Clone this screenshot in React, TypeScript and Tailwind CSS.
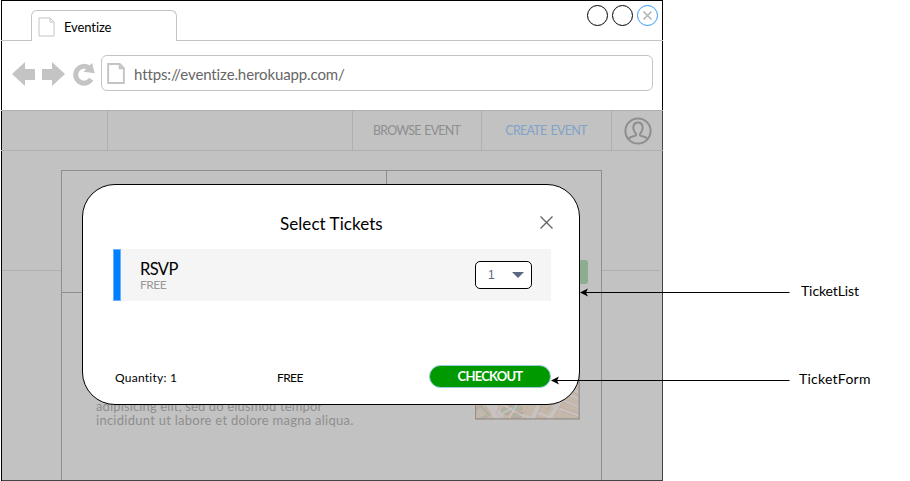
import type { ReactNode } from "react";

function PageIcon({ className, stroke = 1 }: { className: string; stroke?: number }) {
  return (
    <svg className={className} viewBox="0 0 17 20" fill="none" stroke="#c4c4c4" strokeWidth={stroke}>
      <path d="M1 1H12L16 5V19H1Z" />
      <path d="M12 1V5H16" />
    </svg>
  );
}

function BrowserTabs() {
  return (
    <div className="-mx-px flex h-10 justify-between border-b border-[#c4c4c4]">
      <div className="ml-[30px] mt-[9px] flex h-[31px] w-[146px] rounded-t-[6px] border border-b-0 border-[#c4c4c4] bg-white pl-[6px] pt-[6px]">
        <PageIcon className="h-5 w-[17px]" />
        <span className="ml-[9px] mt-px text-[13px] leading-[18px] tracking-[-0.1px]">Eventize</span>
      </div>
      <div className="mr-[5px] mt-[4px] flex gap-1">
        <span className="size-[21px] rounded-full border border-black" />
        <span className="size-[21px] rounded-full border border-black" />
        <span className="flex size-[21px] items-center justify-center rounded-full border border-[#3399ff]">
          <svg className="size-[9px]" viewBox="0 0 9 9" stroke="#bdbdbd" strokeWidth="1.8">
            <path d="M0.5 0.5L8.5 8.5M8.5 0.5L0.5 8.5" />
          </svg>
        </span>
      </div>
    </div>
  );
}

function AddressBar() {
  return (
    <div className="flex h-[69px] pl-[10px] pt-[14px]">
      <svg className="mt-[7px] h-6 w-[83px]" viewBox="12 62 83 24" fill="#c4c4c4">
        <path d="M12 74L25 62V69H35V80H25V86Z" />
        <path d="M65 74L52 62V69H42V80H52V86Z" />
        <path d="M91.2 79.2A8.4 8.4 0 1 1 89.6 68.4" fill="none" stroke="#c4c4c4" strokeWidth="5" />
        <path d="M92 63L94.8 73.2L83.5 71.8Z" />
      </svg>
      <div className="ml-[6px] flex h-9 w-[552px] rounded-[6px] border border-[#c4c4c4] pl-[5px] pt-[7px]">
        <PageIcon className="h-[21px] w-[18px]" stroke={1.8} />
        <span className="ml-[9px] mt-[2px] text-[15px] leading-[18px] tracking-[-0.11px] text-[#666]">
          https://eventize.herokuapp.com/
        </span>
      </div>
    </div>
  );
}

function NavCell({ className, children }: { className: string; children?: ReactNode }) {
  return (
    <div className={"flex h-full items-center justify-center border-r border-[#b0b0b0] text-[12.5px] [word-spacing:1.5px] " + className}>
      {children}
    </div>
  );
}

function SiteNav() {
  return (
    <div className="-mx-px flex h-[41px] border-y border-[#b0b0b0]">
      <NavCell className="w-[107px]" />
      <NavCell className="w-[245px]" />
      <NavCell className="w-[129px] pr-px pt-[2px] tracking-[-0.85px] text-[#8e8e8e]">BROWSE EVENT</NavCell>
      <NavCell className="w-[130px] pr-px pt-[2px] tracking-[-0.72px] text-[#82a3c9]">CREATE EVENT</NavCell>
      <div className="flex flex-1 items-center justify-center">
        <svg className="mt-px size-7" viewBox="0 0 28 28" fill="none" stroke="#8e8e8e" strokeWidth="2">
          <circle cx="14" cy="14" r="12.6" />
          <path d="M4.5 21.8C6 19.5 9.5 19.5 11.2 18.8C13 18 11.8 16.6 10.8 15.2C8.2 11.2 8.8 5.6 14 5.6C19.2 5.6 19.8 11.2 17.2 15.2C16.2 16.6 15 18 16.8 18.8C18.5 19.5 22 19.5 23.5 21.8" />
        </svg>
      </div>
    </div>
  );
}

function StreetMap() {
  return (
    <svg className="h-[50px] w-[105px]" viewBox="475 370 105 50">
      <rect x="475" y="370" width="105" height="50" fill="#c4b8aa" />
      <g fill="#abb5a6" stroke="#c0a095" strokeWidth="1">
        <path d="M476 408L481 405L490 415L484 419H476Z" />
        <path d="M500 412L504 407L512 410L508 415Z" />
        <path d="M509 406L518 404L523 409L515 412Z" />
        <path d="M512 414L523 412L521 417L511 418Z" />
      </g>
      <path d="M476 411L480 408L486 414L480 418H476Z" fill="#c4b8aa" />
      <g stroke="#c6c3c2" fill="none">
        <path strokeWidth="9" d="M488 400L500 419" />
        <path strokeWidth="4" d="M541 400L532 420M563 396L549 420" />
        <path strokeWidth="2" d="M522 415L534 419M536 412L555 419M549 405L580 416M558 399L580 408M562 392L580 399M569 388L580 393" />
        <path strokeWidth="1.5" d="M503 405L525 417M498 416L512 408M517 404L509 419" />
      </g>
      <g stroke="#c1a89d" fill="none" strokeWidth="0.7">
        <path d="M484 404L491 414L485 418M499 408L496 413L502 418M544 401L536 417L547 419M539 406L549 409L555 399M529 404L524 414M545 413L551 404M566 397L553 418L570 419M560 407L580 414M563 402L580 409M562 411L580 418M571 391L580 396M505 416L511 411M517 414L525 406" />
      </g>
      <path d="M475.5 370V418.8H579.2V370" fill="none" stroke="#929292" strokeWidth="1.3" />
    </svg>
  );
}

function EventPage() {
  return (
    <div className="flex h-[329px]">
      <div className="mt-[119px] h-px w-[59px] bg-[#b0b0b0]" />
      <div className="mt-[19px] h-[310px] w-[541px] border border-b-0 border-[#8e8e8e]">
        <div className="flex h-[122px] border-b border-[#8e8e8e]">
          <div className="h-full w-[325px] border-r border-[#8e8e8e]" />
          <div className="ml-[132px] mt-[89px] h-6 w-[69px] rounded-[3px] bg-[#8eac8e]" />
        </div>
        <div className="flex pl-[34px] pt-[77px]">
          <p className="mt-[29px] w-[379px] text-[13px] leading-[14px] text-[#8e8e8e]">
            <span className="tracking-[0.14px]">adipisicing elit, sed do eiusmod tempor</span>
            <br />
            <span className="tracking-[0.26px]">incididunt ut labore et dolore magna aliqua.</span>
          </p>
          <StreetMap />
        </div>
      </div>
      <div className="mt-[119px] h-px w-[58px] bg-[#b0b0b0]" />
    </div>
  );
}

function TicketDialog() {
  return (
    <div className="absolute left-[82px] top-[184px] flex h-[221px] w-[498px] flex-col rounded-[33px] border border-black bg-white">
      <div className="flex h-[64px] pt-[28px]">
        <h2 className="ml-[197px] w-[176px] text-[17px] leading-[21px] tracking-[0.06px]">Select Tickets</h2>
        <svg className="ml-[84px] mt-[3px] size-[13px]" viewBox="0 0 13 13" stroke="#666" strokeWidth="1.4">
          <path d="M0.5 0.5L12.5 12.5M12.5 0.5L0.5 12.5" />
        </svg>
      </div>
      <div className="ml-[30px] flex h-[52px] w-[438px] bg-[#f5f5f5]">
        <div className="h-full w-2 border border-[#66b2ff] bg-[#007fff]" />
        <div className="ml-[19px] w-[335px] pt-[11px]">
          <div className="text-[16.5px] leading-[18px] tracking-[-0.6px]">RSVP</div>
          <div className="text-[12px] leading-[14px] tracking-[-0.5px] text-[#999]">FREE</div>
        </div>
        <div className="mt-3 flex h-7 w-[57px] items-center rounded-[5px] border border-black bg-white pl-[12px] text-[#596780]">
          <span className="font-['Liberation_Sans'] text-[12px]">1</span>
          <svg className="ml-[17px] h-[6px] w-[12px]" viewBox="0 0 12 6" fill="#596780">
            <path d="M0 0H12L6 6Z" />
          </svg>
        </div>
      </div>
      <div className="mt-[63px] flex h-6 items-center pl-8 text-[12px]">
        <span className="w-[162px] pt-[3px] tracking-[0.25px]">Quantity: 1</span>
        <span className="w-[152px] pt-[3px] tracking-[-0.6px]">FREE</span>
        <button className="h-[23px] w-[122px] rounded-full border border-[#99ccdd] bg-[#009900] text-[13px] font-bold leading-[20px] tracking-[-0.75px] text-white">
          CHECKOUT
        </button>
      </div>
    </div>
  );
}

export default function App() {
  return (
    <div className="relative flex h-[481px] w-[910px] overflow-hidden bg-white font-['Lato','Liberation_Sans',sans-serif] text-black">
      <div className="ml-px h-[481px] w-[662px] border border-black">
        <BrowserTabs />
        <AddressBar />
        <div className="-mb-px -mr-px h-[371px] border-b border-r border-[#444] bg-[#c2c2c2]">
          <SiteNav />
          <EventPage />
        </div>
      </div>
      <div className="flex flex-col pt-[282px] text-[14px] leading-[18px]">
        <span className="ml-[138px] tracking-[-0.1px]">TicketList</span>
        <span className="ml-[136px] mt-[70px] tracking-[0.25px]">TicketForm</span>
      </div>
      <TicketDialog />
      <svg className="absolute left-[550px] top-[286px] h-[102px] w-[240px]" viewBox="550 286 240 102">
        <path d="M586 292.5H789.5M557 380.5H789.5" stroke="black" />
        <path d="M580 292.5L588 288.5L586 292.5L588 296.5ZM551 380.5L559 376.5L557 380.5L559 384.5Z" />
      </svg>
    </div>
  );
}
